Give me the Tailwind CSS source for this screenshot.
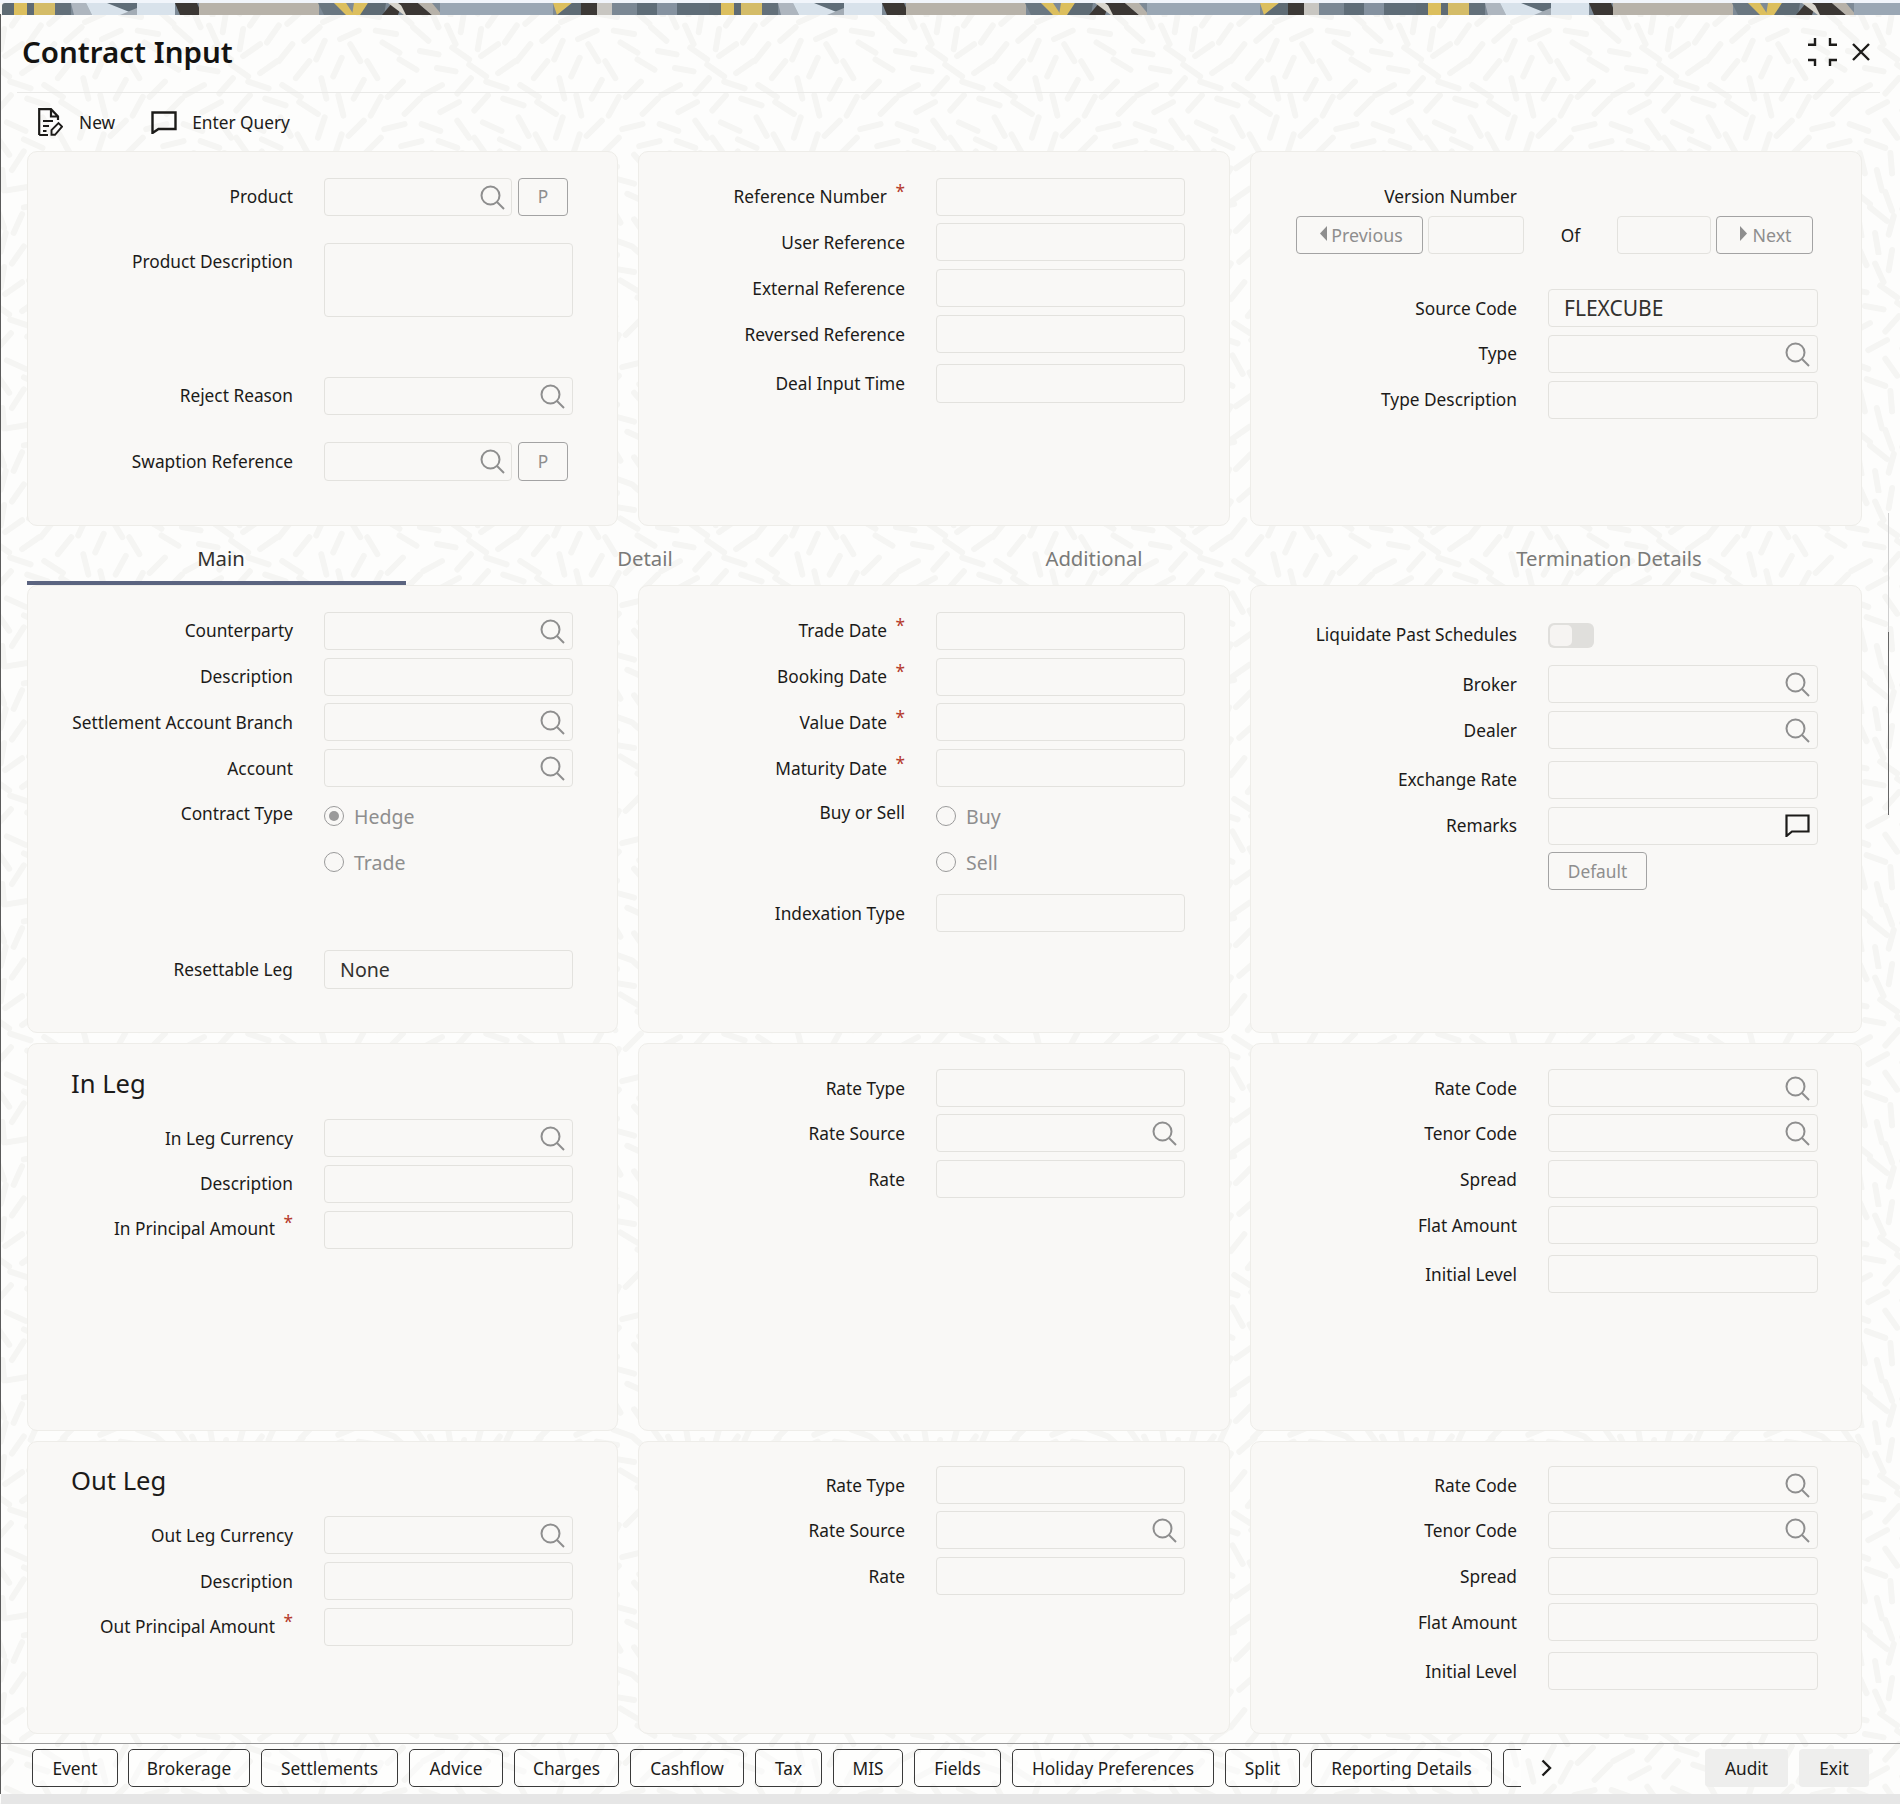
<!DOCTYPE html>
<html lang="en">
<head>
<meta charset="utf-8">
<title>Contract Input</title>
<script src="https://cdn.jsdelivr.net/npm/@tailwindcss/browser@4"></script>
</head>
<body class="m-0 bg-[#fdfdfc]">
<div class="relative w-[1900px] h-[1804px] overflow-hidden font-['Noto_Sans',sans-serif] text-[17.3px] text-[#1c1b19] bg-[#fdfdfc]">

  <!-- paper texture behind the window -->
  <svg class="absolute left-0 top-0 w-[1900px] h-[1804px]" aria-hidden="true">
    <defs>
      <pattern id="grain" width="280" height="280" patternUnits="userSpaceOnUse" patternTransform="scale(0.85)">
        <path fill="none" stroke="#f5f5f3" stroke-width="7" stroke-linecap="round" d="M14 30l14-20M58 28l18-16M100 26l22-10M142 16l24 4M186 12l18 16M226 10l10 22M266 14l-4 24
        M6 66l20-14M48 72l16-20M92 70l10-22M132 52l12 20M170 50l20 12M214 60l22 4M252 56l20 14
        M12 96l24 8M52 100l22 14M98 92l6 24M136 116l12-22M176 114l18-18M218 112l22-12M258 110l16-18
        M8 144l22 10M50 138l12 22M94 162l8-24M130 160l18-18M172 152l24-6M216 146l22 8M258 142l14 20
        M14 200l14-22M54 198l20-14M96 192l24-8M144 190l22 6M186 182l16 18M228 180l6 24M266 204l-2-24
        M8 224l24-4M50 236l20-14M94 240l12-22M138 222l12 20M178 228l22 10M220 224l20 16M258 226l8 22
        M16 274l10-22M54 272l18-18M98 268l24-10M142 262l22 8M186 258l14 20M226 254l4 24M262 276l6-22"/>
      </pattern>
      <pattern id="grain2" width="280" height="280" patternUnits="userSpaceOnUse" patternTransform="translate(17 17) scale(0.85)">
        <path fill="none" stroke="#f5f5f3" stroke-width="7" stroke-linecap="round" d="M14 30l14-20M58 28l18-16M100 26l22-10M142 16l24 4M186 12l18 16M226 10l10 22M266 14l-4 24
        M6 66l20-14M48 72l16-20M92 70l10-22M132 52l12 20M170 50l20 12M214 60l22 4M252 56l20 14
        M12 96l24 8M52 100l22 14M98 92l6 24M136 116l12-22M176 114l18-18M218 112l22-12M258 110l16-18
        M8 144l22 10M50 138l12 22M94 162l8-24M130 160l18-18M172 152l24-6M216 146l22 8M258 142l14 20
        M14 200l14-22M54 198l20-14M96 192l24-8M144 190l22 6M186 182l16 18M228 180l6 24M266 204l-2-24
        M8 224l24-4M50 236l20-14M94 240l12-22M138 222l12 20M178 228l22 10M220 224l20 16M258 226l8 22
        M16 274l10-22M54 272l18-18M98 268l24-10M142 262l22 8M186 258l14 20M226 254l4 24M262 276l6-22"/>
      </pattern>
      <pattern id="band" width="707" height="12" patternUnits="userSpaceOnUse">
        <rect width="707" height="12" fill="#7d8a96"/>
        <rect x="0" width="14" height="12" fill="#5e6b74"/>
        <rect x="12" width="13" height="12" fill="#dcbf5e"/>
        <rect x="25" width="7" height="12" fill="#5e6b74"/>
        <rect x="32" width="21" height="12" fill="#d4bc68"/>
        <rect x="53" width="16" height="12" fill="#63707a"/>
        <polygon points="69,0 84,0 90,12 72,12" fill="#aeb6bf"/>
        <polygon points="84,0 135,0 173,0 173,12 90,12" fill="#d8e2eb"/>
        <polygon points="105,0 135,0 135,12" fill="#5f6d78"/>
        <polygon points="118,12 135,12 135,5" fill="#a3acb5"/>
        <polygon points="173,0 195,0 200,12 178,12" fill="#3b3734"/>
        <rect x="197" width="120" height="12" fill="#b7b2a9"/>
        <polygon points="316,0 332,0 345,12 322,12" fill="#6a7781"/>
        <polygon points="332,0 344,0 352,12 344,12" fill="#dcbf5e"/>
        <polygon points="352,0 366,0 360,12 350,12" fill="#dcbf5e"/>
        <polygon points="366,0 384,0 382,12 358,12" fill="#5e6b74"/>
        <polygon points="380,12 390,0 400,0 396,12" fill="#3b3734"/>
        <polygon points="386,0 396,0 412,12 402,12" fill="#d8d5cd"/>
        <polygon points="398,0 416,0 430,12 404,12" fill="#3b3734"/>
        <polygon points="416,0 430,0 440,12 430,12" fill="#b7b2a9"/>
        <rect x="438" width="113" height="12" fill="#9aa7b4"/>
        <polygon points="551,0 570,0 555,12" fill="#dcbf5e"/>
        <polygon points="570,0 580,0 580,12 555,12" fill="#5e6b74"/>
        <rect x="579" width="16" height="12" fill="#3c3936"/>
        <rect x="595" width="15" height="12" fill="#c8c6c1"/>
        <rect x="610" width="25" height="12" fill="#7b8894"/>
        <rect x="635" width="20" height="12" fill="#5f6d78"/>
        <rect x="655" width="20" height="12" fill="#8592a0"/>
        <rect x="675" width="32" height="12" fill="#5f6d78"/>
      </pattern>
    </defs>
    <rect width="1900" height="1804" fill="url(#grain)"/>
    <rect width="1900" height="1804" fill="url(#grain2)"/>
  </svg>

  <!-- window thin edges -->
  <div class="absolute left-0 top-[14px] w-[1px] h-[1780px] bg-[#5a5a5a]"></div>
  <div class="absolute left-[1888px] top-[513px] w-[1px] h-[119px] bg-[#cfcfcf]"></div>
  <div class="absolute left-[1888px] top-[632px] w-[1px] h-[183px] bg-[#666666]"></div>

  <div class="relative flex flex-col h-[1804px]">
    <!-- top band -->
    <div class="h-[3px] bg-[#f1f5fb]"></div>
    <svg class="block ml-[2px] w-[1898px] h-[12px] shrink-0 rounded-tl-[3px]" aria-hidden="true"><rect width="1898" height="12" fill="url(#band)"/></svg>

    <!-- header -->
    <div class="flex items-center justify-between h-[77px] ml-[22px] mr-[20px] pb-[1px] shrink-0">
      <h1 class="text-[29.5px] font-semibold leading-none text-[#141311] pb-[2px]">Contract Input</h1>
      <div class="flex items-center gap-[15px] pr-[10px] pb-[3px]">
        <svg class="w-[29px] h-[28px]" viewBox="0 0 29 28" fill="none" stroke="#1c1b19" stroke-width="2.4">
          <path d="M0 6.8H7V0M22 0V6.8H29M0 22H7V28M29 22H22V28"/>
        </svg>
        <svg class="w-[18px] h-[18px]" viewBox="0 0 18 18" fill="none" stroke="#1c1b19" stroke-width="2.4">
          <path d="M1 1L17 17M17 1L1 17"/>
        </svg>
      </div>
    </div>
    <div class="ml-[17px] mr-[20px] h-[1px] bg-[#e9e9e7] shrink-0"></div>

    <!-- toolbar -->
    <div class="flex items-center h-[58px] shrink-0 pl-[38px]">
      <svg class="w-[25px] h-[28px]" viewBox="0 0 25 28" fill="none" stroke="#1c1b19" stroke-width="2.2">
        <path d="M1.2 27H10M1.2 27V1.2H13L20 8.5V12M13 1.2V8.5H20M5 13H15M5 18H11M5 23H8.5"/>
        <path d="M13.5 26.8V22.2L20.5 15L24 18.6L17 26.8Z" stroke-width="1.9"/>
      </svg>
      <span class="ml-[16px] pt-[2px] text-[#1c1b19]">New</span>
      <svg class="ml-[36px] w-[26px] h-[23px]" viewBox="0 0 26 23" fill="none" stroke="#1c1b19" stroke-width="2.4">
        <path d="M1.5 1.5H24.5V18H7.5L1.5 22Z"/>
      </svg>
      <span class="ml-[15px] pt-[2px] text-[#1c1b19]">Enter Query</span>
    </div>

    <!-- header panels -->
    <div class="grid grid-cols-[591px_592px_612px] gap-x-[20px] ml-[27px] h-[375px] shrink-0">
      <section class="rounded-[10px] border border-[#eeede9] bg-[#f9f8f6] pt-[26px]">
        <div class="flex h-[38px]">
          <div class="w-[265px] text-right leading-[38px]">Product</div>
          <div class="ml-[31px] w-[188px] h-[38px] flex items-center justify-end pr-[6px] rounded-[4px] border border-[#e3e2de]">
            <svg class="w-[25px] h-[25px]" viewBox="0 0 25 25" fill="none" stroke="#8e8e8e" stroke-width="2"><circle cx="10.5" cy="10.5" r="9"/><path d="M17 17L24 24"/></svg>
          </div>
          <div class="ml-[6px] w-[50px] h-[38px] flex items-center justify-center rounded-[4px] border border-[#a3a3a3] text-[#8e8e8e]">P</div>
        </div>
        <div class="flex mt-[27px]">
          <div class="w-[265px] text-right leading-[38px]">Product Description</div>
          <div class="ml-[31px] w-[249px] h-[74px] rounded-[4px] border border-[#e3e2de]"></div>
        </div>
        <div class="flex h-[38px] mt-[60px]">
          <div class="w-[265px] text-right leading-[38px]">Reject Reason</div>
          <div class="ml-[31px] w-[249px] h-[38px] flex items-center justify-end pr-[7px] rounded-[4px] border border-[#e3e2de]">
            <svg class="w-[25px] h-[25px]" viewBox="0 0 25 25" fill="none" stroke="#8e8e8e" stroke-width="2"><circle cx="10.5" cy="10.5" r="9"/><path d="M17 17L24 24"/></svg>
          </div>
        </div>
        <div class="flex h-[39px] mt-[27px]">
          <div class="w-[265px] text-right leading-[39px]">Swaption Reference</div>
          <div class="ml-[31px] w-[188px] h-[39px] flex items-center justify-end pr-[6px] rounded-[4px] border border-[#e3e2de]">
            <svg class="w-[25px] h-[25px]" viewBox="0 0 25 25" fill="none" stroke="#8e8e8e" stroke-width="2"><circle cx="10.5" cy="10.5" r="9"/><path d="M17 17L24 24"/></svg>
          </div>
          <div class="ml-[6px] w-[50px] h-[39px] flex items-center justify-center rounded-[4px] border border-[#a3a3a3] text-[#8e8e8e]">P</div>
        </div>
      </section>

      <section class="rounded-[10px] border border-[#eeede9] bg-[#f9f8f6] pt-[26px]">
        <div class="flex h-[38px]">
          <div class="relative w-[266px] pr-[18px] text-right leading-[38px]">Reference Number<span class="absolute right-0 top-[-5px] text-[#b5392c]">*</span></div>
          <div class="ml-[31px] w-[249px] h-[38px] rounded-[4px] border border-[#e3e2de]"></div>
        </div>
        <div class="flex h-[38px] mt-[7px]">
          <div class="w-[266px] text-right leading-[40px]">User Reference</div>
          <div class="ml-[31px] w-[249px] h-[38px] rounded-[4px] border border-[#e3e2de]"></div>
        </div>
        <div class="flex h-[38px] mt-[8px]">
          <div class="w-[266px] text-right leading-[40px]">External Reference</div>
          <div class="ml-[31px] w-[249px] h-[38px] rounded-[4px] border border-[#e3e2de]"></div>
        </div>
        <div class="flex h-[38px] mt-[8px]">
          <div class="w-[266px] text-right leading-[40px]">Reversed Reference</div>
          <div class="ml-[31px] w-[249px] h-[38px] rounded-[4px] border border-[#e3e2de]"></div>
        </div>
        <div class="flex h-[39px] mt-[11px]">
          <div class="w-[266px] text-right leading-[39px]">Deal Input Time</div>
          <div class="ml-[31px] w-[249px] h-[39px] rounded-[4px] border border-[#e3e2de]"></div>
        </div>
      </section>

      <section class="rounded-[10px] border border-[#eeede9] bg-[#f9f8f6] pt-[26px]">
        <div class="flex h-[38px]">
          <div class="w-[266px] text-right leading-[38px]">Version Number</div>
        </div>
        <div class="flex h-[38px] pl-[45px]">
          <div class="w-[127px] h-[38px] flex items-center justify-center gap-[4px] pl-[4px] rounded-[4px] border border-[#a3a3a3] text-[17.8px] text-[#8e8e8e]">
            <svg class="w-[7px] h-[15px] mb-[4px]" viewBox="0 0 7 15"><path d="M7 0V15L0 7.5Z" fill="#8e8e8e"/></svg>Previous
          </div>
          <div class="ml-[5px] w-[96px] h-[38px] rounded-[4px] border border-[#e3e2de]"></div>
          <div class="w-[93px] text-center leading-[40px]">Of</div>
          <div class="w-[94px] h-[38px] rounded-[4px] border border-[#e3e2de]"></div>
          <div class="ml-[5px] w-[97px] h-[38px] flex items-center justify-center gap-[5px] pl-[3px] rounded-[4px] border border-[#a3a3a3] text-[17.8px] text-[#8e8e8e]">
            <svg class="w-[7px] h-[15px] mb-[4px]" viewBox="0 0 7 15"><path d="M0 0V15L7 7.5Z" fill="#8e8e8e"/></svg>Next
          </div>
        </div>
        <div class="flex h-[38px] mt-[35px]">
          <div class="w-[266px] text-right leading-[39px]">Source Code</div>
          <div class="ml-[31px] w-[270px] h-[38px] flex items-center pl-[15px] pt-[2px] text-[21px] text-[#33322f] rounded-[4px] border border-[#e3e2de]">FLEXCUBE</div>
        </div>
        <div class="flex h-[38px] mt-[8px]">
          <div class="w-[266px] text-right leading-[38px]">Type</div>
          <div class="ml-[31px] w-[270px] h-[38px] flex items-center justify-end pr-[7px] rounded-[4px] border border-[#e3e2de]">
            <svg class="w-[25px] h-[25px]" viewBox="0 0 25 25" fill="none" stroke="#8e8e8e" stroke-width="2"><circle cx="10.5" cy="10.5" r="9"/><path d="M17 17L24 24"/></svg>
          </div>
        </div>
        <div class="flex h-[38px] mt-[8px]">
          <div class="w-[266px] text-right leading-[38px]">Type Description</div>
          <div class="ml-[31px] w-[270px] h-[38px] rounded-[4px] border border-[#e3e2de]"></div>
        </div>
      </section>
    </div>

    <!-- tabs -->
    <div class="flex h-[59px] ml-[27px] shrink-0 text-[20.3px] text-[#7a7a78]">
      <div class="w-[379px] pl-[9px] text-center leading-[64px] text-[#33322f] border-b-[4px] border-[#5b6480]">Main</div>
      <div class="w-[478px] text-center leading-[64px]">Detail</div>
      <div class="w-[420px] text-center leading-[64px]">Additional</div>
      <div class="w-[558px] pl-[52px] text-center leading-[64px]">Termination Details</div>
    </div>

    <!-- main panels -->
    <div class="grid grid-cols-[591px_592px_612px] gap-x-[20px] ml-[27px] h-[448px] shrink-0">
      <section class="rounded-[10px] border border-[#eeede9] bg-[#f9f8f6] pt-[26px]">
        <div class="flex h-[38px]">
          <div class="w-[265px] text-right leading-[37px]">Counterparty</div>
          <div class="ml-[31px] w-[249px] h-[38px] flex items-center justify-end pr-[7px] rounded-[4px] border border-[#e3e2de]">
            <svg class="w-[25px] h-[25px]" viewBox="0 0 25 25" fill="none" stroke="#8e8e8e" stroke-width="2"><circle cx="10.5" cy="10.5" r="9"/><path d="M17 17L24 24"/></svg>
          </div>
        </div>
        <div class="flex h-[38px] mt-[8px]">
          <div class="w-[265px] text-right leading-[37px]">Description</div>
          <div class="ml-[31px] w-[249px] h-[38px] rounded-[4px] border border-[#e3e2de]"></div>
        </div>
        <div class="flex h-[38px] mt-[7px]">
          <div class="w-[265px] text-right leading-[40px]">Settlement Account Branch</div>
          <div class="ml-[31px] w-[249px] h-[38px] flex items-center justify-end pr-[7px] rounded-[4px] border border-[#e3e2de]">
            <svg class="w-[25px] h-[25px]" viewBox="0 0 25 25" fill="none" stroke="#8e8e8e" stroke-width="2"><circle cx="10.5" cy="10.5" r="9"/><path d="M17 17L24 24"/></svg>
          </div>
        </div>
        <div class="flex h-[38px] mt-[8px]">
          <div class="w-[265px] text-right leading-[40px]">Account</div>
          <div class="ml-[31px] w-[249px] h-[38px] flex items-center justify-end pr-[7px] rounded-[4px] border border-[#e3e2de]">
            <svg class="w-[25px] h-[25px]" viewBox="0 0 25 25" fill="none" stroke="#8e8e8e" stroke-width="2"><circle cx="10.5" cy="10.5" r="9"/><path d="M17 17L24 24"/></svg>
          </div>
        </div>
        <div class="flex h-[38px] mt-[10px]">
          <div class="w-[265px] text-right leading-[34px]">Contract Type</div>
          <div class="ml-[31px] flex items-center gap-[10px] text-[19.5px] text-[#8e8e8e]">
            <span class="flex items-center justify-center w-[20px] h-[20px] rounded-full border-[1.5px] border-[#9a9a9a]"><span class="w-[10px] h-[10px] rounded-full bg-[#9a9a9a]"></span></span><span class="pt-[2px]">Hedge</span>
          </div>
        </div>
        <div class="flex h-[38px] mt-[8px]">
          <div class="w-[265px]"></div>
          <div class="ml-[31px] flex items-center gap-[10px] text-[19.5px] text-[#8e8e8e]">
            <span class="w-[20px] h-[20px] rounded-full border-[1.5px] border-[#9a9a9a]"></span><span class="pt-[2px]">Trade</span>
          </div>
        </div>
        <div class="flex h-[39px] mt-[69px]">
          <div class="w-[265px] text-right leading-[39px]">Resettable Leg</div>
          <div class="ml-[31px] w-[249px] h-[39px] flex items-center pl-[15px] text-[19.6px] text-[#33322f] rounded-[4px] border border-[#e3e2de]">None</div>
        </div>
      </section>

      <section class="rounded-[10px] border border-[#eeede9] bg-[#f9f8f6] pt-[26px]">
        <div class="flex h-[38px]">
          <div class="relative w-[266px] pr-[18px] text-right leading-[37px]">Trade Date<span class="absolute right-0 top-[-5px] text-[#b5392c]">*</span></div>
          <div class="ml-[31px] w-[249px] h-[38px] rounded-[4px] border border-[#e3e2de]"></div>
        </div>
        <div class="flex h-[38px] mt-[8px]">
          <div class="relative w-[266px] pr-[18px] text-right leading-[37px]">Booking Date<span class="absolute right-0 top-[-5px] text-[#b5392c]">*</span></div>
          <div class="ml-[31px] w-[249px] h-[38px] rounded-[4px] border border-[#e3e2de]"></div>
        </div>
        <div class="flex h-[38px] mt-[7px]">
          <div class="relative w-[266px] pr-[18px] text-right leading-[40px]">Value Date<span class="absolute right-0 top-[-5px] text-[#b5392c]">*</span></div>
          <div class="ml-[31px] w-[249px] h-[38px] rounded-[4px] border border-[#e3e2de]"></div>
        </div>
        <div class="flex h-[38px] mt-[8px]">
          <div class="relative w-[266px] pr-[18px] text-right leading-[40px]">Maturity Date<span class="absolute right-0 top-[-5px] text-[#b5392c]">*</span></div>
          <div class="ml-[31px] w-[249px] h-[38px] rounded-[4px] border border-[#e3e2de]"></div>
        </div>
        <div class="flex h-[38px] mt-[10px]">
          <div class="w-[266px] text-right leading-[32px]">Buy or Sell</div>
          <div class="ml-[31px] flex items-center gap-[10px] text-[19.5px] text-[#8e8e8e]">
            <span class="w-[20px] h-[20px] rounded-full border-[1.5px] border-[#9a9a9a]"></span><span class="pt-[2px]">Buy</span>
          </div>
        </div>
        <div class="flex h-[38px] mt-[8px]">
          <div class="w-[266px]"></div>
          <div class="ml-[31px] flex items-center gap-[10px] text-[19.5px] text-[#8e8e8e]">
            <span class="w-[20px] h-[20px] rounded-full border-[1.5px] border-[#9a9a9a]"></span><span class="pt-[2px]">Sell</span>
          </div>
        </div>
        <div class="flex h-[38px] mt-[13px]">
          <div class="w-[266px] text-right leading-[40px]">Indexation Type</div>
          <div class="ml-[31px] w-[249px] h-[38px] rounded-[4px] border border-[#e3e2de]"></div>
        </div>
      </section>

      <section class="rounded-[10px] border border-[#eeede9] bg-[#f9f8f6] pt-[30px]">
        <div class="flex items-center h-[38px]">
          <div class="w-[266px] text-right leading-[35px] pb-[2px]">Liquidate Past Schedules</div>
          <div class="ml-[31px] w-[46px] h-[25px] p-[2px] rounded-[6px] bg-[#e0dfdc]"><div class="w-[22px] h-[21px] rounded-[5px] bg-[#f6f4f2]"></div></div>
        </div>
        <div class="flex h-[38px] mt-[11px]">
          <div class="w-[266px] text-right leading-[40px]">Broker</div>
          <div class="ml-[31px] w-[270px] h-[38px] flex items-center justify-end pr-[7px] rounded-[4px] border border-[#e3e2de]">
            <svg class="w-[25px] h-[25px]" viewBox="0 0 25 25" fill="none" stroke="#8e8e8e" stroke-width="2"><circle cx="10.5" cy="10.5" r="9"/><path d="M17 17L24 24"/></svg>
          </div>
        </div>
        <div class="flex h-[38px] mt-[8px]">
          <div class="w-[266px] text-right leading-[40px]">Dealer</div>
          <div class="ml-[31px] w-[270px] h-[38px] flex items-center justify-end pr-[7px] rounded-[4px] border border-[#e3e2de]">
            <svg class="w-[25px] h-[25px]" viewBox="0 0 25 25" fill="none" stroke="#8e8e8e" stroke-width="2"><circle cx="10.5" cy="10.5" r="9"/><path d="M17 17L24 24"/></svg>
          </div>
        </div>
        <div class="flex h-[38px] mt-[12px]">
          <div class="w-[266px] text-right leading-[37px]">Exchange Rate</div>
          <div class="ml-[31px] w-[270px] h-[38px] rounded-[4px] border border-[#e3e2de]"></div>
        </div>
        <div class="flex h-[38px] mt-[8px]">
          <div class="w-[266px] text-right leading-[37px]">Remarks</div>
          <div class="ml-[31px] w-[270px] h-[38px] flex items-center justify-end pr-[7px] rounded-[4px] border border-[#e3e2de]">
            <svg class="w-[25px] h-[23px] mb-[1px]" viewBox="0 0 25 23" fill="none" stroke="#1c1b19" stroke-width="2.2"><path d="M1.5 1.5H23.5V17.5H7L1.5 22Z"/></svg>
          </div>
        </div>
        <div class="flex h-[38px] mt-[7px]">
          <div class="w-[266px]"></div>
          <div class="ml-[31px] w-[99px] h-[38px] flex items-center justify-center pt-[1px] rounded-[4px] border border-[#a3a3a3] text-[#8e8e8e]">Default</div>
        </div>
      </section>
    </div>

    <!-- in leg panels -->
    <div class="grid grid-cols-[591px_592px_612px] gap-x-[20px] ml-[27px] mt-[10px] h-[388px] shrink-0">
      <section class="rounded-[10px] border border-[#eeede9] bg-[#f9f8f6] pt-[21px]">
        <h2 class="ml-[43px] h-[38px] text-[25.6px] leading-[38px] font-normal">In Leg</h2>
        <div class="flex h-[38px] mt-[16px]">
          <div class="w-[265px] text-right leading-[40px]">In Leg Currency</div>
          <div class="ml-[31px] w-[249px] h-[38px] flex items-center justify-end pr-[7px] rounded-[4px] border border-[#e3e2de]">
            <svg class="w-[25px] h-[25px]" viewBox="0 0 25 25" fill="none" stroke="#8e8e8e" stroke-width="2"><circle cx="10.5" cy="10.5" r="9"/><path d="M17 17L24 24"/></svg>
          </div>
        </div>
        <div class="flex h-[38px] mt-[8px]">
          <div class="w-[265px] text-right leading-[38px]">Description</div>
          <div class="ml-[31px] w-[249px] h-[38px] rounded-[4px] border border-[#e3e2de]"></div>
        </div>
        <div class="flex h-[38px] mt-[8px]">
          <div class="relative w-[265px] pr-[18px] text-right leading-[36px]">In Principal Amount<span class="absolute right-0 top-[-6px] text-[#b5392c]">*</span></div>
          <div class="ml-[31px] w-[249px] h-[38px] rounded-[4px] border border-[#e3e2de]"></div>
        </div>
      </section>

      <section class="rounded-[10px] border border-[#eeede9] bg-[#f9f8f6] pt-[25px]">
        <div class="flex h-[38px]">
          <div class="w-[266px] text-right leading-[40px]">Rate Type</div>
          <div class="ml-[31px] w-[249px] h-[38px] rounded-[4px] border border-[#e3e2de]"></div>
        </div>
        <div class="flex h-[38px] mt-[7px]">
          <div class="w-[266px] text-right leading-[40px]">Rate Source</div>
          <div class="ml-[31px] w-[249px] h-[38px] flex items-center justify-end pr-[7px] rounded-[4px] border border-[#e3e2de]">
            <svg class="w-[25px] h-[25px]" viewBox="0 0 25 25" fill="none" stroke="#8e8e8e" stroke-width="2"><circle cx="10.5" cy="10.5" r="9"/><path d="M17 17L24 24"/></svg>
          </div>
        </div>
        <div class="flex h-[38px] mt-[8px]">
          <div class="w-[266px] text-right leading-[40px]">Rate</div>
          <div class="ml-[31px] w-[249px] h-[38px] rounded-[4px] border border-[#e3e2de]"></div>
        </div>
      </section>

      <section class="rounded-[10px] border border-[#eeede9] bg-[#f9f8f6] pt-[25px]">
        <div class="flex h-[38px]">
          <div class="w-[266px] text-right leading-[40px]">Rate Code</div>
          <div class="ml-[31px] w-[270px] h-[38px] flex items-center justify-end pr-[7px] rounded-[4px] border border-[#e3e2de]">
            <svg class="w-[25px] h-[25px]" viewBox="0 0 25 25" fill="none" stroke="#8e8e8e" stroke-width="2"><circle cx="10.5" cy="10.5" r="9"/><path d="M17 17L24 24"/></svg>
          </div>
        </div>
        <div class="flex h-[38px] mt-[7px]">
          <div class="w-[266px] text-right leading-[40px]">Tenor Code</div>
          <div class="ml-[31px] w-[270px] h-[38px] flex items-center justify-end pr-[7px] rounded-[4px] border border-[#e3e2de]">
            <svg class="w-[25px] h-[25px]" viewBox="0 0 25 25" fill="none" stroke="#8e8e8e" stroke-width="2"><circle cx="10.5" cy="10.5" r="9"/><path d="M17 17L24 24"/></svg>
          </div>
        </div>
        <div class="flex h-[38px] mt-[8px]">
          <div class="w-[266px] text-right leading-[40px]">Spread</div>
          <div class="ml-[31px] w-[270px] h-[38px] rounded-[4px] border border-[#e3e2de]"></div>
        </div>
        <div class="flex h-[38px] mt-[8px]">
          <div class="w-[266px] text-right leading-[40px]">Flat Amount</div>
          <div class="ml-[31px] w-[270px] h-[38px] rounded-[4px] border border-[#e3e2de]"></div>
        </div>
        <div class="flex h-[38px] mt-[11px]">
          <div class="w-[266px] text-right leading-[40px]">Initial Level</div>
          <div class="ml-[31px] w-[270px] h-[38px] rounded-[4px] border border-[#e3e2de]"></div>
        </div>
      </section>
    </div>

    <!-- out leg panels -->
    <div class="grid grid-cols-[591px_592px_612px] gap-x-[20px] ml-[27px] mt-[10px] h-[293px] shrink-0">
      <section class="rounded-[10px] border border-[#eeede9] bg-[#f9f8f6] pt-[20px]">
        <h2 class="ml-[43px] h-[38px] text-[25.6px] leading-[38px] font-normal">Out Leg</h2>
        <div class="flex h-[38px] mt-[16px]">
          <div class="w-[265px] text-right leading-[40px]">Out Leg Currency</div>
          <div class="ml-[31px] w-[249px] h-[38px] flex items-center justify-end pr-[7px] rounded-[4px] border border-[#e3e2de]">
            <svg class="w-[25px] h-[25px]" viewBox="0 0 25 25" fill="none" stroke="#8e8e8e" stroke-width="2"><circle cx="10.5" cy="10.5" r="9"/><path d="M17 17L24 24"/></svg>
          </div>
        </div>
        <div class="flex h-[38px] mt-[8px]">
          <div class="w-[265px] text-right leading-[40px]">Description</div>
          <div class="ml-[31px] w-[249px] h-[38px] rounded-[4px] border border-[#e3e2de]"></div>
        </div>
        <div class="flex h-[38px] mt-[8px]">
          <div class="relative w-[265px] pr-[18px] text-right leading-[38px]">Out Principal Amount<span class="absolute right-0 top-[-5px] text-[#b5392c]">*</span></div>
          <div class="ml-[31px] w-[249px] h-[38px] rounded-[4px] border border-[#e3e2de]"></div>
        </div>
      </section>

      <section class="rounded-[10px] border border-[#eeede9] bg-[#f9f8f6] pt-[24px]">
        <div class="flex h-[38px]">
          <div class="w-[266px] text-right leading-[40px]">Rate Type</div>
          <div class="ml-[31px] w-[249px] h-[38px] rounded-[4px] border border-[#e3e2de]"></div>
        </div>
        <div class="flex h-[38px] mt-[7px]">
          <div class="w-[266px] text-right leading-[40px]">Rate Source</div>
          <div class="ml-[31px] w-[249px] h-[38px] flex items-center justify-end pr-[7px] rounded-[4px] border border-[#e3e2de]">
            <svg class="w-[25px] h-[25px]" viewBox="0 0 25 25" fill="none" stroke="#8e8e8e" stroke-width="2"><circle cx="10.5" cy="10.5" r="9"/><path d="M17 17L24 24"/></svg>
          </div>
        </div>
        <div class="flex h-[38px] mt-[8px]">
          <div class="w-[266px] text-right leading-[40px]">Rate</div>
          <div class="ml-[31px] w-[249px] h-[38px] rounded-[4px] border border-[#e3e2de]"></div>
        </div>
      </section>

      <section class="rounded-[10px] border border-[#eeede9] bg-[#f9f8f6] pt-[24px]">
        <div class="flex h-[38px]">
          <div class="w-[266px] text-right leading-[40px]">Rate Code</div>
          <div class="ml-[31px] w-[270px] h-[38px] flex items-center justify-end pr-[7px] rounded-[4px] border border-[#e3e2de]">
            <svg class="w-[25px] h-[25px]" viewBox="0 0 25 25" fill="none" stroke="#8e8e8e" stroke-width="2"><circle cx="10.5" cy="10.5" r="9"/><path d="M17 17L24 24"/></svg>
          </div>
        </div>
        <div class="flex h-[38px] mt-[7px]">
          <div class="w-[266px] text-right leading-[40px]">Tenor Code</div>
          <div class="ml-[31px] w-[270px] h-[38px] flex items-center justify-end pr-[7px] rounded-[4px] border border-[#e3e2de]">
            <svg class="w-[25px] h-[25px]" viewBox="0 0 25 25" fill="none" stroke="#8e8e8e" stroke-width="2"><circle cx="10.5" cy="10.5" r="9"/><path d="M17 17L24 24"/></svg>
          </div>
        </div>
        <div class="flex h-[38px] mt-[8px]">
          <div class="w-[266px] text-right leading-[40px]">Spread</div>
          <div class="ml-[31px] w-[270px] h-[38px] rounded-[4px] border border-[#e3e2de]"></div>
        </div>
        <div class="flex h-[38px] mt-[8px]">
          <div class="w-[266px] text-right leading-[40px]">Flat Amount</div>
          <div class="ml-[31px] w-[270px] h-[38px] rounded-[4px] border border-[#e3e2de]"></div>
        </div>
        <div class="flex h-[38px] mt-[11px]">
          <div class="w-[266px] text-right leading-[40px]">Initial Level</div>
          <div class="ml-[31px] w-[270px] h-[38px] rounded-[4px] border border-[#e3e2de]"></div>
        </div>
      </section>
    </div>

    <!-- footer -->
    <div class="flex items-start h-[51px] mt-[9px] ml-[1px] pt-[5px] pl-[31px] border-t border-[#9b9b9b] shrink-0">
      <div class="flex gap-[11px] w-[1489px] overflow-hidden shrink-0">
        <button class="shrink-0 w-[86px] h-[38px] mr-[-1px] pt-[2px] rounded-[5px] border border-[#3a3a3a] bg-white/40">Event</button>
        <button class="shrink-0 w-[122px] h-[38px] pt-[2px] rounded-[5px] border border-[#3a3a3a] bg-white/40">Brokerage</button>
        <button class="shrink-0 w-[137px] h-[38px] pt-[2px] rounded-[5px] border border-[#3a3a3a] bg-white/40">Settlements</button>
        <button class="shrink-0 w-[94px] h-[38px] pt-[2px] rounded-[5px] border border-[#3a3a3a] bg-white/40">Advice</button>
        <button class="shrink-0 w-[105px] h-[38px] pt-[2px] rounded-[5px] border border-[#3a3a3a] bg-white/40">Charges</button>
        <button class="shrink-0 w-[114px] h-[38px] pt-[2px] rounded-[5px] border border-[#3a3a3a] bg-white/40">Cashflow</button>
        <button class="shrink-0 w-[67px] h-[38px] pt-[2px] rounded-[5px] border border-[#3a3a3a] bg-white/40">Tax</button>
        <button class="shrink-0 w-[70px] h-[38px] pt-[2px] rounded-[5px] border border-[#3a3a3a] bg-white/40">MIS</button>
        <button class="shrink-0 w-[87px] h-[38px] pt-[2px] rounded-[5px] border border-[#3a3a3a] bg-white/40">Fields</button>
        <button class="shrink-0 w-[202px] h-[38px] pt-[2px] rounded-[5px] border border-[#3a3a3a] bg-white/40">Holiday Preferences</button>
        <button class="shrink-0 w-[75px] h-[38px] pt-[2px] rounded-[5px] border border-[#3a3a3a] bg-white/40">Split</button>
        <button class="shrink-0 w-[181px] h-[38px] pt-[2px] rounded-[5px] border border-[#3a3a3a] bg-white/40">Reporting Details</button>
        <button class="shrink-0 w-[80px] h-[38px] rounded-[5px] border border-[#3a3a3a] bg-white/40"></button>
      </div>
      <svg class="ml-[20px] mt-[10px] w-[11px] h-[18px]" viewBox="0 0 11 18" fill="none" stroke="#1c1b19" stroke-width="2.4"><path d="M1.5 1.5L9 9L1.5 16.5"/></svg>
      <button class="ml-[153px] w-[83px] h-[38px] pt-[2px] rounded-[4px] bg-[#eeeeed]">Audit</button>
      <button class="ml-[11px] w-[70px] h-[38px] pt-[2px] rounded-[4px] bg-[#eeeeed]">Exit</button>
    </div>
    <div class="h-[10px] ml-[1px] bg-[#e6e6e6] shrink-0"></div>
  </div>
</div>
</body>
</html>
